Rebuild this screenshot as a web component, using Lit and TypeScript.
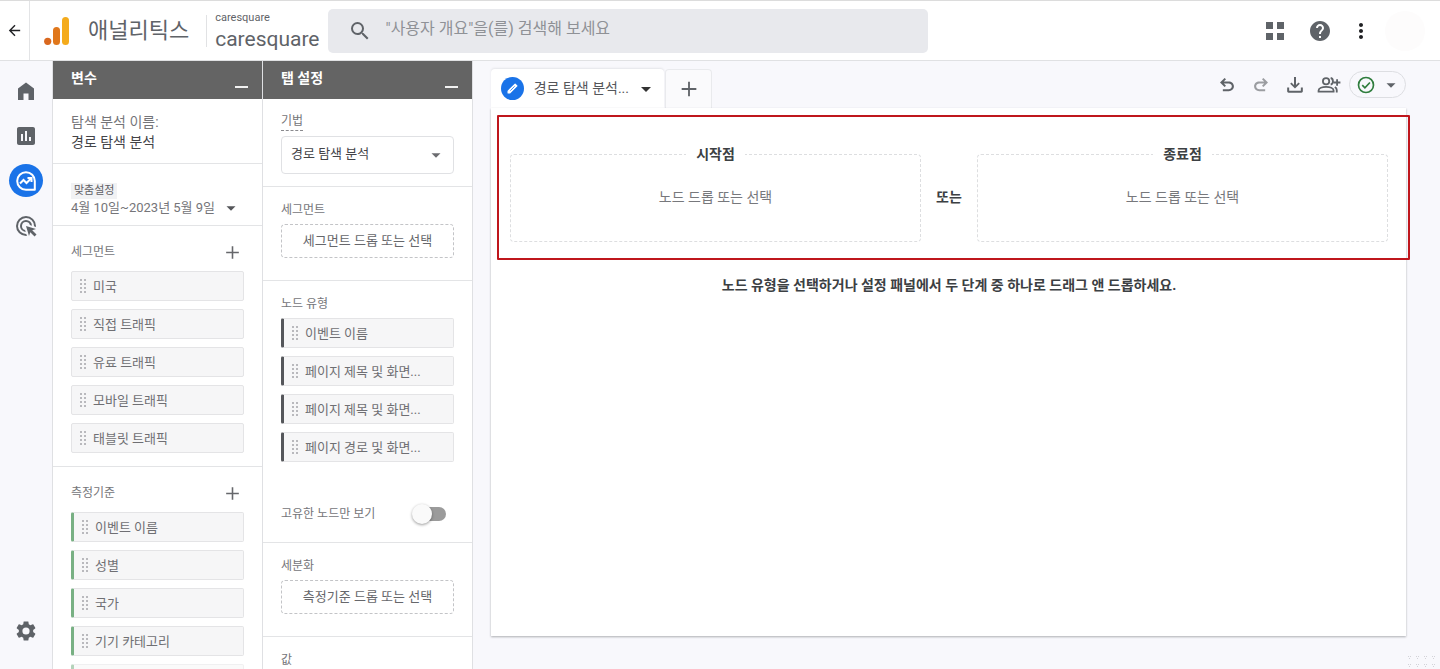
import { LitElement, html, css, svg, nothing } from "lit";
import { customElement, property } from "lit/decorators.js";
import { classMap } from "lit/directives/class-map.js";

const FONT = css`Roboto, "Noto Sans CJK KR", "Noto Sans", sans-serif`;

const icons = {
  back: svg`<path d="M20 11H7.83l5.59-5.59L12 4l-8 8 8 8 1.41-1.41L7.83 13H20z"/>`,
  search: svg`<path d="M15.5 14h-.79l-.28-.27A6.47 6.47 0 0 0 16 9.5 6.5 6.5 0 1 0 9.5 16c1.61 0 3.09-.59 4.23-1.57l.27.28v.79l5 4.99L20.49 19zm-6 0a4.5 4.5 0 1 1 0-9 4.5 4.5 0 0 1 0 9z"/>`,
  apps: svg`<path d="M3 3h7v7H3zM14 3h7v7h-7zM3 14h7v7H3zM14 14h7v7h-7z"/>`,
  help: svg`<path d="M12 2C6.48 2 2 6.48 2 12s4.48 10 10 10 10-4.48 10-10S17.52 2 12 2zm1 17h-2v-2h2zm2.07-7.75-.9.92C13.45 12.9 13 13.5 13 15h-2v-.5c0-1.1.45-2.1 1.17-2.83l1.24-1.26c.37-.36.59-.86.59-1.41 0-1.1-.9-2-2-2s-2 .9-2 2H8c0-2.21 1.79-4 4-4s4 1.79 4 4c0 .88-.36 1.68-.93 2.25z"/>`,
  more: svg`<path d="M12 8c1.1 0 2-.9 2-2s-.9-2-2-2-2 .9-2 2 .9 2 2 2zm0 2c-1.1 0-2 .9-2 2s.9 2 2 2 2-.9 2-2-.9-2-2-2zm0 6c-1.1 0-2 .9-2 2s.9 2 2 2 2-.9 2-2-.9-2-2-2z"/>`,
  home: svg`<path d="M4 21V9.5L12 3.5l8 6V21h-5.500v-6.500h-5V21z"/>`,
  chart: svg`<path d="M19 3H5c-1.100 0-2 .9-2 2v14c0 1.100.9 2 2 2h14c1.100 0 2-.9 2-2V5c0-1.100-.9-2-2-2zM9 17H7v-7h2zm4 0h-2V7h2zm4 0h-2v-4h2z"/>`,
  explore: svg`<g fill="none" stroke="#fff" stroke-width="2"><path d="M20.800 20.800H12A8.800 8.800 0 1 1 20.800 12z" stroke-linejoin="round"/><path d="M6 14.500l3.500-3.500 3 3 4.500-4.500"/><path d="M13.500 9h4v4"/></g>`,
  ads: svg`<path d="M11.710 17.990A6 6 0 1 1 17.990 11.710l-2.100-.63A4 4 0 1 0 11.080 15.890zM22 12c0 .3-.01.6-.04.9l-1.970-.59L20 12a8 8 0 1 0-7.690 7.990l.59 1.970c-.3.03-.6.04-.9.04A10 10 0 1 1 22 12zm-3.770 4.260L22 15l-10-3 3 10 1.260-3.770 4.270 4.270 1.980-1.980z"/>`,
  gear: svg`<path d="M19.140 12.940c.04-.3.06-.61.06-.94 0-.32-.02-.64-.07-.94l2.030-1.580c.18-.14.23-.41.12-.61l-1.920-3.320c-.12-.22-.37-.29-.59-.22l-2.390.96c-.5-.38-1.030-.7-1.620-.94l-.36-2.540c-.04-.24-.24-.41-.48-.41h-3.840c-.24 0-.43.17-.47.41l-.36 2.540c-.59.24-1.130.57-1.620.94l-2.390-.96c-.22-.08-.47 0-.59.22L2.740 8.870c-.12.21-.08.47.12.61l2.030 1.580c-.05.3-.09.63-.09.94s.02.64.07.94l-2.030 1.580c-.18.14-.23.41-.12.61l1.920 3.320c.12.22.37.29.59.22l2.390-.96c.5.38 1.030.7 1.620.94l.36 2.540c.05.24.24.41.48.41h3.840c.24 0 .44-.17.47-.41l.36-2.540c.59-.24 1.130-.56 1.620-.94l2.390.96c.22.08.47 0 .59-.22l1.920-3.320c.12-.22.07-.47-.12-.61zM12 15.600a3.600 3.600 0 1 1 0-7.200 3.600 3.600 0 0 1 0 7.200z"/>`,
  plus: svg`<path d="M11 4h2v7h7v2h-7v7h-2v-7H4v-2h7z"/>`,
  caret: svg`<path d="M6 9.500h12l-6 6z"/>`,
  pencil: svg`<path d="M5 16.200V19h2.800L19 7.800 16.200 5z" stroke="currentColor" stroke-width="2" stroke-linejoin="round"/><path d="M8.500 15.500l7-7" stroke="#1a73e8" stroke-width="1.200"/>`,
  undo: svg`<path d="M7 19.500v-2.400h7.100c1.600 0 3.700-1.100 3.700-3.500s-2.100-3.400-3.700-3.400H8.200l2.600 2.600-1.700 1.700L3.600 9l5.500-5.500 1.700 1.700-2.600 2.600h5.900c3.400 0 6.200 2.400 6.200 5.800s-2.800 5.900-6.200 5.900z"/>`,
  redo: svg`<path d="M17 19.500v-2.400H9.900c-1.600 0-3.700-1.100-3.700-3.500s2.100-3.400 3.700-3.400h5.900l-2.600 2.600 1.700 1.700L20.400 9l-5.500-5.500-1.700 1.700 2.600 2.600H9.900c-3.400 0-6.200 2.400-6.200 5.800s2.800 5.900 6.200 5.900z"/>`,
  download: svg`<path d="M10.800 2.500h2.400v9.400l3-3 1.600 1.600L12 16.300l-5.800-5.800 1.600-1.600 3 3zM2.600 15H5v3.800h14V15h2.400v4.500c0 1-.8 1.700-1.700 1.700H4.300c-.9 0-1.700-.7-1.700-1.700z"/>`,
  share: svg`<g fill="none" stroke="currentColor" stroke-width="2.200"><circle cx="8.500" cy="7.500" r="3.800"/><path d="M-.5 20v-1.500c0-2.700 4.500-4.300 9-4.300s9 1.600 9 4.300V20z"/><path d="M14 3.600c3.600.6 3.600 7.200 0 7.800M19 14.500c1.700 1 2.300 2.200 2.300 3.500v3M21.700 5v8M17.700 9h8"/></g>`,
  check: svg`<g fill="none" stroke="currentColor" stroke-width="2"><circle cx="12" cy="12" r="9"/><path d="M7.500 12.200l3.200 3.200 6-6.400"/></g>`,
};

type IconName = keyof typeof icons;

@customElement("ga-icon")
class GaIcon extends LitElement {
  @property() declare name: IconName;
  static styles = css`
    :host { display: inline-flex; width: 24px; height: 24px; flex: none; }
    svg { width: 100%; height: 100%; fill: currentColor; overflow: visible; }
  `;
  render() {
    return html`<svg viewBox="0 0 24 24" aria-hidden="true">${icons[this.name]}</svg>`;
  }
}

@customElement("ga-chip")
class GaChip extends LitElement {
  @property() declare label: string;
  @property() declare kind: string;
  static styles = css`
    :host { display: block; }
    .chip {
      display: flex; align-items: center; gap: 6px; box-sizing: border-box;
      width: 100%; height: 30px; padding: 0 7px; border: 1px solid #e4e4e6; border-radius: 2px;
      background: #f6f6f7; color: #6f6f73; font: 13px/20px ${FONT}; text-align: left;
    }
    .dimension { border-left: 3px solid #78b083; }
    .node { border-left: 3px solid #55575b; }
    .grip { width: 8px; height: 16px; flex: none; fill: #b9b9bd; }
    .label { padding-top: 2px; overflow: hidden; text-overflow: ellipsis; white-space: nowrap; }
  `;
  render() {
    return html`<button class=${classMap({ chip: true, [this.kind]: true })}>
      <svg class="grip" viewBox="0 0 8 16" aria-hidden="true">
        ${[0, 1, 2, 3].map((r) => svg`<rect x="1" y=${r * 4 + 1} width="2" height="2"/><rect x="5" y=${r * 4 + 1} width="2" height="2"/>`)}
      </svg>
      <span class="label">${this.label}</span>
    </button>`;
  }
}

const panelStyles = css`
  :host {
    display: flex; flex-direction: column; box-sizing: border-box; overflow: hidden;
    background: #fff; border-right: 1px solid #dfe0e3; font: 12px/20px ${FONT}; color: #757579;
  }
  * { box-sizing: border-box; }
  button { font: inherit; color: inherit; background: none; border: 0; padding: 0; margin: 0; }
  .head {
    display: flex; justify-content: space-between; flex: none; height: 38px; padding: 0 14px 0 18px;
    background: #646464; color: #fff;
  }
  .head h2 { margin: 7px 0 0; font-size: 14px; line-height: 20px; font-weight: 700; }
  .minimize { width: 13px; height: 27px; border-bottom: 2px solid #f1f1f1; }
  .section { flex: none; padding: 13px 18px 22px; border-bottom: 1px solid #e3e4e6; }
  .section:last-child { border-bottom: 0; }
  .title { margin: 0; font-size: 12px; line-height: 20px; font-weight: 400; }
  .chips { display: flex; flex-direction: column; gap: 8px; margin: 0; padding: 0; list-style: none; }
`;

@customElement("ga-variables")
class GaVariables extends LitElement {
  static styles = [panelStyles, css`
    .name { padding: 13px 18px 11px; font-size: 14px; }
    .name p { margin: 0; }
    .value { color: #444448; }
    .date { padding: 19px 18px 8px; }
    .badge { display: block; width: fit-content; padding: 0 3px; background: #f1f2f4; font-size: 11px; line-height: 16px; color: #5f6065; }
    .range { display: flex; align-items: center; justify-content: space-between; width: 100%; padding-right: 4px; font-size: 13px; line-height: 18px; white-space: nowrap; }
    .range ga-icon { width: 18px; height: 18px; color: #55565a; }
    .list { padding: 16px 18px 13px; }
    .row { display: flex; align-items: center; justify-content: space-between; height: 20px; margin-bottom: 9px; padding-right: 2px; }
    .add { display: flex; }
    .add ga-icon { width: 19px; height: 19px; color: #66676b; }
    .fade { opacity: 0.55; }
  `];
  private list(title: string, kind: string, items: string[]) {
    return html`<section class="section list">
      <div class="row"><h3 class="title">${title}</h3><button class="add"><ga-icon name="plus"></ga-icon></button></div>
      <ul class="chips">
        ${items.map((t) => html`<li class=${t ? nothing : "fade"}><ga-chip .label=${t} .kind=${kind}></ga-chip></li>`)}
      </ul>
    </section>`;
  }
  render() {
    return html`
      <header class="head"><h2>변수</h2><button class="minimize"></button></header>
      <section class="section name"><p>탐색 분석 이름:</p><p class="value">경로 탐색 분석</p></section>
      <section class="section date">
        <span class="badge">맞춤설정</span>
        <button class="range">4월 10일~2023년 5월 9일<ga-icon name="caret"></ga-icon></button>
      </section>
      ${this.list("세그먼트", "segment", ["미국", "직접 트래픽", "유료 트래픽", "모바일 트래픽", "태블릿 트래픽"])}
      ${this.list("측정기준", "dimension", ["이벤트 이름", "성별", "국가", "기기 카테고리", ""])}
    `;
  }
}

@customElement("ga-settings")
class GaSettings extends LitElement {
  static styles = [panelStyles, css`
    .technique { padding: 13px 18px 12px; }
    .technique label { display: table; line-height: 18px; border-bottom: 1px dashed #8a8a8e; }
    .select { display: grid; align-items: center; margin-top: 5px; }
    .select > * { grid-area: 1 / 1; }
    select {
      appearance: none; width: 100%; height: 38px; padding: 0 32px 2px 9px; border: 1px solid #e0e1e4;
      border-radius: 4px; background: #fff; font: 13px/20px ${FONT}; color: #444448;
    }
    .select ga-icon { width: 18px; height: 18px; justify-self: end; margin-right: 9px; color: #6b6c70; pointer-events: none; }
    .drop { display: block; width: 100%; height: 34px; margin-top: 4px; border: 1px dashed #c3c4c7; border-radius: 4px; font-size: 13px; color: #66676b; }
    .nodes { padding-bottom: 18px; }
    .nodes .chips { margin-top: 4px; }
    .toggle { display: flex; justify-content: space-between; align-items: center; margin-top: 42px; padding-right: 8px; }
    input {
      appearance: none; width: 28px; height: 14px; margin: 0; border-radius: 7px; background: #9b9b9b;
      display: flex; align-items: center;
    }
    input::before {
      content: ""; flex: none; width: 20px; height: 20px; margin-left: -6px; border-radius: 50%;
      background: #fafafa; box-shadow: 0 1px 3px rgba(0, 0, 0, 0.4);
    }
  `];
  render() {
    return html`
      <header class="head"><h2>탭 설정</h2><button class="minimize"></button></header>
      <section class="section technique">
        <label for="technique">기법</label>
        <div class="select">
          <select id="technique"><option>경로 탐색 분석</option></select>
          <ga-icon name="caret"></ga-icon>
        </div>
      </section>
      <section class="section"><h3 class="title">세그먼트</h3><button class="drop">세그먼트 드롭 또는 선택</button></section>
      <section class="section nodes">
        <h3 class="title">노드 유형</h3>
        <ul class="chips">
          ${["이벤트 이름", "페이지 제목 및 화면...", "페이지 제목 및 화면...", "페이지 경로 및 화면..."].map(
            (t) => html`<li><ga-chip .label=${t} .kind=${"node"}></ga-chip></li>`
          )}
        </ul>
        <div class="toggle"><label for="unique">고유한 노드만 보기</label><input id="unique" type="checkbox" role="switch" /></div>
      </section>
      <section class="section"><h3 class="title">세분화</h3><button class="drop">측정기준 드롭 또는 선택</button></section>
      <section class="section"><h3 class="title">값</h3></section>
    `;
  }
}

@customElement("ga-header")
class GaHeader extends LitElement {
  static styles = css`
    :host {
      display: flex; align-items: center; box-sizing: border-box; height: 61px; flex: none; background: #fff;
      border-top: 1px solid #dcdcdc; border-bottom: 1px solid #e0e1e3; font: 16px/20px ${FONT}; color: #5f6368;
    }
    * { box-sizing: border-box; }
    button { display: flex; padding: 0; border: 0; background: none; color: inherit; }
    .back { align-self: stretch; align-items: center; justify-content: center; width: 30px; border-right: 1px solid #e3e4e6; color: #202124; }
    .back ga-icon { width: 17px; height: 17px; }
    .logo { width: 25px; height: 29px; margin-left: 14px; flex: none; }
    .brand { margin: 0 17px 0 19px; font-size: 22px; line-height: 30px; font-weight: 400; white-space: nowrap; }
    .account { display: flex; flex-direction: column; height: 32px; padding-left: 8px; border-left: 1px solid #e1e2e4; justify-content: center; }
    .small { font-size: 11px; line-height: 16px; }
    .large { font-size: 21px; line-height: 26px; }
    .search { display: flex; align-items: center; flex: 0 1 600px; height: 44px; margin-left: 8px; padding-left: 20px; border-radius: 5px; background: #e8e9ed; }
    .search ga-icon { margin-right: 14px; }
    input { flex: 1; min-width: 0; padding: 0 0 3px; border: 0; outline: 0; background: none; font: inherit; color: #5f6368; }
    input::placeholder { color: #8f9196; opacity: 1; }
    .actions { display: flex; align-items: center; margin-left: auto; padding-right: 15px; }
    .help { margin: 0 17px 0 21px; }
    .more { color: #202124; }
    .avatar { width: 40px; height: 40px; margin-left: 12px; border-radius: 50%; background: #fdfcfc; }
  `;
  render() {
    return html`
      <button class="back"><ga-icon name="back"></ga-icon></button>
      <svg class="logo" viewBox="0 0 25 29" aria-hidden="true">
        <rect x="18" y="1" width="7" height="28" rx="3.500" fill="#f4ab1c"/>
        <rect x="9" y="11" width="7" height="18" rx="3.500" fill="#e0771b"/>
        <circle cx="3.700" cy="25.300" r="3.600" fill="#d9681f"/>
      </svg>
      <h1 class="brand">애널리틱스</h1>
      <div class="account"><span class="small">caresquare</span><span class="large">caresquare</span></div>
      <label class="search"><ga-icon name="search"></ga-icon><input type="text" placeholder='"사용자 개요"을(를) 검색해 보세요' /></label>
      <div class="actions">
        <button><ga-icon name="apps"></ga-icon></button>
        <button class="help"><ga-icon name="help"></ga-icon></button>
        <button class="more"><ga-icon name="more"></ga-icon></button>
        <button class="avatar"></button>
      </div>
    `;
  }
}

@customElement("ga-rail")
class GaRail extends LitElement {
  static styles = css`
    :host { display: flex; flex-direction: column; justify-content: space-between; box-sizing: border-box; width: 53px; flex: none; padding: 13px 0 22px; border-right: 1px solid #dfe0e3; }
    nav { display: flex; flex-direction: column; align-items: center; gap: 12px; }
    a { display: flex; align-items: center; justify-content: center; width: 34px; height: 33px; border-radius: 50%; color: #5f6368; }
    .active { background: #1a73e8; }
  `;
  render() {
    return html`
      <nav>
        <a href="#"><ga-icon name="home"></ga-icon></a>
        <a href="#"><ga-icon name="chart"></ga-icon></a>
        <a href="#" class="active"><ga-icon name="explore"></ga-icon></a>
        <a href="#"><ga-icon name="ads"></ga-icon></a>
      </nav>
      <nav><a href="#"><ga-icon name="gear"></ga-icon></a></nav>
    `;
  }
}

@customElement("ga-workspace")
class GaWorkspace extends LitElement {
  static styles = css`
    :host { display: flex; flex-direction: column; flex: 1; min-width: 0; box-sizing: border-box; padding: 8px 34px 33px 18px; font: 14px/20px ${FONT}; color: #5f6368; }
    * { box-sizing: border-box; }
    button { display: flex; align-items: center; padding: 0; border: 0; background: none; font: inherit; color: inherit; }
    .bar { display: flex; justify-content: space-between; height: 39px; flex: none; }
    .tabs { display: flex; gap: 1px; }
    .tab { display: flex; align-items: center; width: 173px; padding: 0 8px 0 10px; background: #fff; border-radius: 4px 4px 0 0; white-space: nowrap; color: #55565a; box-shadow: 0 -1px 2px rgba(60, 64, 67, 0.1); }
    .edit { justify-content: center; width: 23px; height: 23px; border-radius: 50%; background: #1a73e8; color: #fff; }
    .edit ga-icon { width: 15px; height: 15px; }
    .tab .name { margin: 0 7px 2px 10px; }
    .tab .caret { width: 20px; height: 20px; color: #333; }
    .new { justify-content: center; width: 47px; border: 1px solid #e9eaed; border-bottom: 0; border-radius: 4px 4px 0 0; background: #fafafc; }
    .new ga-icon { width: 22px; height: 22px; }
    .tools { display: flex; align-items: center; gap: 14px; height: 31px; }
    .tools ga-icon { width: 20px; height: 20px; }
    .tools .redo { color: #9b9da1; }
    .tools .status { gap: 6px; height: 27px; width: 57px; margin-left: -4px; padding: 0 6px; border: 1px solid #dddee2; border-radius: 14px; }
    .status .ok { color: #2f7d3d; }
    .tools .status .caret { width: 18px; height: 18px; }
    .canvas { position: relative; flex: 1; padding: 36px 18px 0 19px; background: #fff; box-shadow: 0 1px 2px rgba(60, 64, 67, 0.4); }
    .points { display: flex; align-items: center; }
    fieldset { flex: 1; min-width: 0; margin: 0; padding: 0; height: 98px; border: 1px dashed #dddee0; border-radius: 4px; }
    legend { margin: 0 auto; padding: 0 10px; line-height: 20px; font-weight: 700; color: #3c4043; }
    .drop { justify-content: center; width: 100%; height: 66px; color: #77787c; }
    .or { width: 56px; text-align: center; font-weight: 700; color: #3c4043; padding-top: 8px; }
    .hint { margin: 33px 0 0; text-align: center; font-weight: 700; color: #3c4043; }
    .highlight { position: absolute; top: 7px; left: 6px; right: -4px; height: 145px; border: 2px solid #bf161c; border-radius: 1px; pointer-events: none; }
  `;
  private point(name: string) {
    return html`<fieldset><legend>${name}</legend><button class="drop">노드 드롭 또는 선택</button></fieldset>`;
  }
  render() {
    return html`
      <div class="bar">
        <div class="tabs">
          <div class="tab">
            <button class="edit"><ga-icon name="pencil"></ga-icon></button>
            <span class="name">경로 탐색 분석...</span>
            <button><ga-icon class="caret" name="caret"></ga-icon></button>
          </div>
          <button class="new"><ga-icon name="plus"></ga-icon></button>
        </div>
        <div class="tools">
          <button><ga-icon name="undo"></ga-icon></button>
          <button class="redo"><ga-icon name="redo"></ga-icon></button>
          <button><ga-icon name="download"></ga-icon></button>
          <button><ga-icon name="share"></ga-icon></button>
          <button class="status"><ga-icon class="ok" name="check"></ga-icon><ga-icon class="caret" name="caret"></ga-icon></button>
        </div>
      </div>
      <main class="canvas">
        <div class="points">${this.point("시작점")}<span class="or">또는</span>${this.point("종료점")}</div>
        <p class="hint">노드 유형을 선택하거나 설정 패널에서 두 단계 중 하나로 드래그 앤 드롭하세요.</p>
        <div class="highlight"></div>
      </main>
    `;
  }
}

@customElement("app-root")
class AppRoot extends LitElement {
  static styles = css`
    :host { position: relative; display: flex; flex-direction: column; height: 100vh; overflow: hidden; background: #f8f8fc; }
    .body { display: flex; flex: 1; min-height: 0; }
    ga-variables { width: 210px; flex: none; }
    ga-settings { width: 210px; flex: none; }
    .dots { position: absolute; right: 0; bottom: 0; width: 32px; height: 14px; fill: #d3d3d8; }
  `;
  render() {
    return html`
      <ga-header></ga-header>
      <div class="body">
        <ga-rail></ga-rail>
        <ga-variables></ga-variables>
        <ga-settings></ga-settings>
        <ga-workspace></ga-workspace>
      </div>
      <svg class="dots" viewBox="0 0 32 14" aria-hidden="true">
        ${[0, 8].map((y) => [0, 8, 16, 24].map((x) => svg`<path d="M${x} ${y + 1}h1v1h-1zM${x + 2} ${y + 1}h1v1h-1zM${x + 1} ${y + 3}h1v1h-1z"/>`))}
      </svg>
    `;
  }
}
